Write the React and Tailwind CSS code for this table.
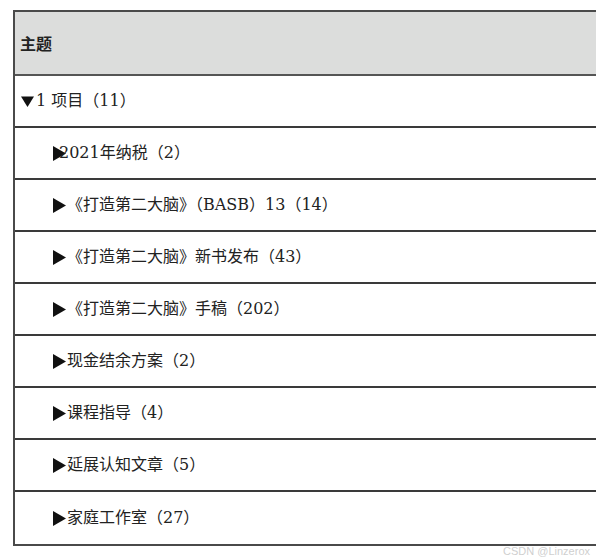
import React from "react";

const rows = [
  { label: "1 项目（11）", open: true, level: 0 },
  { label: "2021年纳税（2）", level: 1, tight: true },
  { label: "《打造第二大脑》（BASB）13（14）", level: 1 },
  { label: "《打造第二大脑》新书发布（43）", level: 1 },
  { label: "《打造第二大脑》手稿（202）", level: 1 },
  { label: "现金结余方案（2）", level: 1 },
  { label: "课程指导（4）", level: 1 },
  { label: "延展认知文章（5）", level: 1 },
  { label: "家庭工作室（27）", level: 1 },
];

const Caret = ({ open }) =>
  open ? (
    <svg width="13" height="13" viewBox="0 0 13 13" className="shrink-0">
      <path d="M0 1.5 H13 L6.5 12 Z" fill="#111" />
    </svg>
  ) : (
    <svg width="13" height="15" viewBox="0 0 13 15" className="shrink-0">
      <path d="M0 0 L13 7.5 L0 15 Z" fill="#111" />
    </svg>
  );

const App = () => {
  return (
    <div
      className="relative h-[559px] w-[596px] overflow-hidden bg-white pl-[13px] pt-[10px]"
      style={{ fontFamily: '"DejaVu Serif", "Noto Sans CJK SC", serif' }}
    >
      <div className="w-[600px] border-l-2 border-t-2 border-b-2 border-[#4a4a4a]">
        {/* Header */}
        <div className="flex h-[64px] items-center border-b-2 border-[#555] bg-[#dcdddc] pl-[5px] text-[16px] font-bold text-[#222]">
          <span style={{ fontFamily: '"Noto Sans CJK SC", sans-serif' }}>主题</span>
        </div>

        {/* Rows */}
        {rows.map((row, index) => (
          <div
            key={index}
            className={`flex h-[52px] items-center text-[16px] text-[#222] ${
              index < rows.length - 1 ? "border-b-2 border-[#3a3a3a]" : ""
            } ${row.level === 0 ? "pl-[6px]" : "pl-[38px]"}`}
          >
            <Caret open={row.open} />
            <span className={row.open ? "ml-[2px]" : row.tight ? "ml-[-7px]" : "ml-[1px]"}>
              {row.label}
            </span>
          </div>
        ))}
      </div>

      {/* Watermark */}
      <div
        className="absolute bottom-[2px] right-[6px] text-[11px] leading-none text-[#cfcfcf]"
        style={{ fontFamily: '"Liberation Sans", sans-serif' }}
      >
        CSDN @Linzerox
      </div>
    </div>
  );
};

export default App;
